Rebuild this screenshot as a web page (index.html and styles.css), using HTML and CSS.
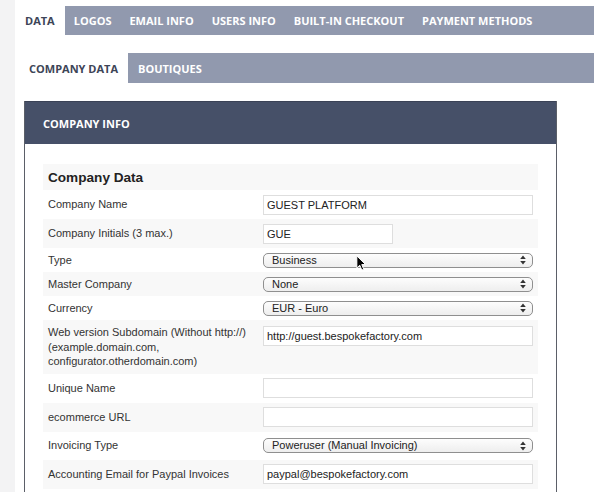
FILE: index.html
```html
<!DOCTYPE html>
<html>
<head>
<meta charset="utf-8">
<link rel="stylesheet" href="styles.css">
</head>
<body>
<div class="page">
  <nav class="tabs main-tabs">
    <span class="tab active">DATA</span>
    <span class="tab">LOGOS</span>
    <span class="tab">EMAIL INFO</span>
    <span class="tab">USERS INFO</span>
    <span class="tab">BUILT-IN CHECKOUT</span>
    <span class="tab">PAYMENT METHODS</span>
  </nav>
  <nav class="tabs sub-tabs">
    <span class="tab active">COMPANY DATA</span>
    <span class="tab">BOUTIQUES</span>
  </nav>
  <section class="panel">
    <header class="panel-head">COMPANY INFO</header>
    <div class="panel-body">
      <table class="form">
        <tr class="alt"><th colspan="2">Company Data</th></tr>
        <tr class="in"><td class="lbl">Company Name</td><td><input class="txt" value="GUEST PLATFORM"></td></tr>
        <tr class="in alt"><td class="lbl">Company Initials (3 max.)</td><td><input class="txt short" value="GUE"></td></tr>
        <tr class="sel"><td class="lbl">Type</td><td><span class="select"><span>Business</span><svg class="arrows" width="6" height="10" viewBox="0 0 6 10"><path d="M3 0.5 L5.8 4 L0.2 4 Z M3 9.5 L5.8 6 L0.2 6 Z" fill="#333"/></svg></span></td></tr>
        <tr class="sel alt"><td class="lbl">Master Company</td><td><span class="select"><span>None</span><svg class="arrows" width="6" height="10" viewBox="0 0 6 10"><path d="M3 0.5 L5.8 4 L0.2 4 Z M3 9.5 L5.8 6 L0.2 6 Z" fill="#333"/></svg></span></td></tr>
        <tr class="sel"><td class="lbl">Currency</td><td><span class="select"><span>EUR - Euro</span><svg class="arrows" width="6" height="10" viewBox="0 0 6 10"><path d="M3 0.5 L5.8 4 L0.2 4 Z M3 9.5 L5.8 6 L0.2 6 Z" fill="#333"/></svg></span></td></tr>
        <tr class="in alt top"><td class="lbl">Web version Subdomain (Without http://)<br>(example.domain.com,<br>configurator.otherdomain.com)</td><td><input class="txt" value="http://guest.bespokefactory.com"></td></tr>
        <tr class="in"><td class="lbl">Unique Name</td><td><input class="txt" value=""></td></tr>
        <tr class="in alt"><td class="lbl">ecommerce URL</td><td><input class="txt" value=""></td></tr>
        <tr class="sel tall"><td class="lbl">Invoicing Type</td><td><span class="select"><span>Poweruser (Manual Invoicing)</span><svg class="arrows" width="6" height="10" viewBox="0 0 6 10"><path d="M3 0.5 L5.8 4 L0.2 4 Z M3 9.5 L5.8 6 L0.2 6 Z" fill="#333"/></svg></span></td></tr>
        <tr class="in alt"><td class="lbl">Accounting Email for Paypal Invoices</td><td><input class="txt" value="paypal@bespokefactory.com"></td></tr>
      </table>
    </div>
  </section>
  <svg class="cursor" width="10" height="16" viewBox="0 0 12 19"><path d="M1 1 L1 15.5 L4.5 12.2 L7 18 L9.3 17 L6.9 11.4 L11.5 11.4 Z" fill="#000" stroke="#fff" stroke-width="1.2" stroke-linejoin="round"/></svg>
</div>
</body>
</html>
```
FILE: styles.css
```css
* { box-sizing: border-box; }
html, body { margin: 0; padding: 0; }
body {
  background: #f3f3f4;
  width: 594px;
  height: 492px;
  overflow: hidden;
}
.page {
  position: relative;
  margin-left: 15px;
  padding-top: 6px;
  background: #ffffff;
  height: 492px;
}
.tabs {
  display: flex;
  background: #9199ae;
  font-family: "Open Sans", "DejaVu Sans", sans-serif;
  font-weight: 700;
  font-size: 11px;
  color: #ffffff;
}
.main-tabs { height: 29px; }
.sub-tabs { height: 30px; margin-top: 18px; }
.tab {
  display: flex;
  align-items: center;
  padding: 0 9px;
  white-space: nowrap;
}
.main-tabs .tab.active { padding: 0 10px; }
.tab.active {
  background: #ffffff;
  color: #3d4557;
}
.sub-tabs .tab.active { padding: 0 10px 0 14px; }
.sub-tabs .tab { padding: 0 10px; }
.panel {
  margin-top: 18px;
  margin-left: 9px;
  width: 533px;
  border-left: 1px solid #5b5f68;
  border-right: 1px solid #5b5f68;
  height: 400px;
}
.panel-head {
  height: 43px;
  background: #465068;
  border-top: 1px solid #3a4256;
  display: flex;
  align-items: center;
  padding-left: 18px;
  font-family: "Open Sans", "DejaVu Sans", sans-serif;
  font-weight: 700;
  font-size: 11px;
  color: #ffffff;
}
.panel-body {
  padding: 20px 18px 0 18px;
}
.form {
  width: 495px;
  border-collapse: collapse;
  border-spacing: 0;
  font-family: "Liberation Sans", Arial, sans-serif;
  font-size: 11px;
  color: #333333;
}
.form th {
  height: 26px;
  padding: 0 5px;
  text-align: left;
  font-size: 13.6px;
  font-weight: 700;
  color: #222222;
}
.form tr.alt { background: #f8f8f8; }
.form td {
  padding: 4px 5px;
  vertical-align: middle;
  line-height: 14.5px;
}
.form td.lbl { width: 215px; }
.form tr.top td { vertical-align: top; padding-top: 5px; padding-bottom: 5px; }
.form tr.top td:last-child { padding-top: 6px; }
.form tr.in td { height: 29px; }
.form tr.sel td { height: 24px; }
.form tr.tall td { height: 28px; }
.txt {
  display: block;
  width: 270px;
  height: 20px;
  margin: 0;
  border: 1px solid #dedede;
  padding: 0 3px;
  font-family: "Liberation Sans", Arial, sans-serif;
  font-size: 11px;
  color: #222222;
  background: #ffffff;
  outline: none;
}
.txt.short { width: 130px; }
.select {
  display: flex;
  align-items: center;
  justify-content: space-between;
  width: 270px;
  height: 15px;
  border: 1px solid #8f8f8f;
  border-radius: 5px;
  padding: 0 6px 0 8px;
  background: linear-gradient(#fdfdfd, #eeeeee);
  color: #222222;
  font-size: 11px;
  line-height: 13px;
}
.arrows { display: block; }
.cursor {
  position: absolute;
  left: 341px;
  top: 255px;
}
```
